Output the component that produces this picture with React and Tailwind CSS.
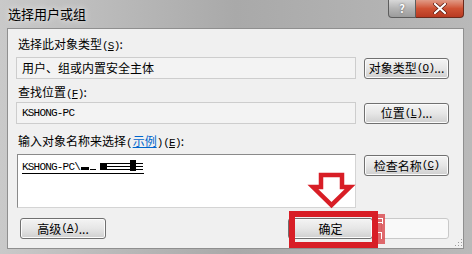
import React from 'react';

const cjk = { fontFamily: '"Microsoft YaHei", "Noto Sans CJK SC", sans-serif' };
const mono = { fontFamily: '"Liberation Mono", "Noto Sans CJK SC", monospace' };

const Key = ({ k }) => (
  <span style={mono} className="text-[11px] tracking-[-0.8px]">
    (<span className="underline">{k}</span>)
  </span>
);

const WinButton = ({ children, className = '' }) => (
  <div
    className={`h-[21px] w-[85px] flex items-center justify-center whitespace-nowrap rounded-[3px] border border-[#707070] bg-gradient-to-b from-[#f4f4f4] via-[#e6e6e6] to-[#cfcfcf] text-[12px] text-black shadow-[inset_0_0_0_1px_#fbfbfb] ${className}`}
  >
    {children}
  </div>
);

const Field = ({ children, className = '' }) => (
  <div className={`flex-1 h-[22px] flex items-center border border-[#cdcdcd] bg-[#f3f3f3] pl-[5px] ${className}`}>
    {children}
  </div>
);

export default function App() {
  return (
    <div
      style={cjk}
      className="relative w-[472px] h-[254px] overflow-hidden bg-gradient-to-r from-[#c9c9c9] via-[#a9a9a9] to-[#b9b9b9] text-black"
    >
      {/* title bar */}
      <div className="h-[28px] flex items-start">
        <div className="pl-[8px] pt-[6px] text-[13px] leading-[16px] text-black [text-shadow:0_0_6px_#ffffff]">
          选择用户或组
        </div>
        <div className="ml-auto mr-[8px] flex">
          <div className="w-[28px] h-[18px] flex items-center justify-center rounded-bl-[4px] border border-t-0 border-[#5d5d5d] bg-gradient-to-b from-[#d8d8d8] via-[#b4b4b4] to-[#9c9c9c] text-[11px] font-bold text-white [text-shadow:0_0_2px_#555]">
            ?
          </div>
          <div className="w-[48px] h-[18px] flex items-center justify-center rounded-br-[4px] border border-t-0 border-l-0 border-[#6b2a1c] bg-gradient-to-b from-[#e09a86] via-[#cf5234] to-[#b83a22]">
            <svg width="14" height="11" viewBox="0 0 14 11">
              <path d="M2 1 L12 10 M12 1 L2 10" stroke="#5a1a10" strokeWidth="3.6" strokeLinecap="round" />
              <path d="M2 1 L12 10 M12 1 L2 10" stroke="#ffffff" strokeWidth="2.2" strokeLinecap="round" />
            </svg>
          </div>
        </div>
      </div>

      {/* content panel */}
      <div className="ml-[7px] mr-[8px] h-[221px] border border-[#8f8f8f] bg-[#f0f0f0] pl-[8px] pr-[14px] text-[12px]">
        <div className="mt-[7px] h-[16px] leading-[16px] pl-[2px]">
          选择此对象类型<Key k="S" />:
        </div>
        <div className="mt-[5px] flex items-center gap-[8px]">
          <Field>用户、组或内置安全主体</Field>
          <WinButton>
            对象类型<Key k="O" />...
          </WinButton>
        </div>

        <div className="mt-[5px] h-[16px] leading-[16px] pl-[2px]">
          查找位置<Key k="F" />:
        </div>
        <div className="mt-[2px] flex items-center gap-[8px]">
          <Field>
            <span style={mono} className="text-[11px] tracking-[-0.8px]">KSHONG-PC</span>
          </Field>
          <WinButton>
            位置<Key k="L" />...
          </WinButton>
        </div>

        <div className="mt-[9px] h-[16px] leading-[16px] pl-[2px]">
          输入对象名称来选择<span style={mono} className="text-[11px]">(</span>
          <span className="text-[#0066cc] underline">示例</span>
          <span style={mono} className="text-[11px]">)</span>
          <Key k="E" />:
        </div>
        <div className="mt-[5px] flex items-start gap-[8px]">
          <div className="flex-1 h-[54px] ml-[1px] border border-[#8a8a8a] border-r-[#d4d4d4] border-b-[#d4d4d4] bg-white pl-[4px] pt-[5px]">
            <div className="flex items-end h-[14px] w-fit border-b border-black">
              <span style={mono} className="text-[11px] leading-[12px] tracking-[-0.8px]">KSHONG-PC\</span>
              <svg width="64" height="13" viewBox="0 0 64 13" className="mb-[1px]">
                <rect x="1" y="8" width="8" height="3" fill="#000" />
                <rect x="10" y="10" width="6" height="1" fill="#000" />
                <rect x="20" y="4" width="7" height="7" fill="#000" />
                <rect x="27" y="4" width="24" height="1" fill="#000" />
                <rect x="27" y="7" width="24" height="1" fill="#000" />
                <rect x="27" y="10" width="24" height="1" fill="#000" />
                <rect x="50" y="1" width="6" height="11" fill="#000" />
                <rect x="56" y="4" width="7" height="1" fill="#000" />
                <rect x="56" y="7" width="7" height="1" fill="#000" />
                <rect x="56" y="10" width="7" height="1" fill="#000" />
              </svg>
            </div>
          </div>
          <WinButton className="mt-[1px]">
            检查名称<Key k="C" />
          </WinButton>
        </div>

        <div className="mt-[10px] flex items-center">
          <WinButton className="ml-[4px] w-[86px] h-[21px]">
            高级<Key k="A" />...
          </WinButton>
          <WinButton className="ml-auto w-[76px] h-[21px]">确定</WinButton>
          <div className="ml-[8px] h-[21px] w-[68px] rounded-[3px] border border-[#c9c9c9] bg-[#f9f9f9]" />
        </div>
      </div>

      {/* resize grip */}
      <svg className="absolute left-[455px] top-[239px]" width="8" height="8" viewBox="0 0 8 8">
        <rect x="6" y="0" width="1" height="1" fill="#9a9a9a" />
        <rect x="3" y="3" width="1" height="1" fill="#9a9a9a" />
        <rect x="6" y="3" width="1" height="1" fill="#9a9a9a" />
        <rect x="0" y="6" width="1" height="1" fill="#9a9a9a" />
        <rect x="3" y="6" width="1" height="1" fill="#9a9a9a" />
        <rect x="6" y="6" width="1" height="1" fill="#9a9a9a" />
      </svg>

      {/* annotation: arrow + highlight box */}
      <svg className="absolute left-[305px] top-[168px]" width="56" height="44" viewBox="0 0 56 44">
        <polygon
          points="16,7 37,7 37,19 45,19 26.5,37 8,19 16,19"
          fill="#ffffff"
          stroke="#d81e26"
          strokeWidth="4.5"
          strokeLinejoin="miter"
        />
      </svg>
      <div className="absolute left-[289px] top-[211px] w-[89px] h-[37px] border-[6px] border-[#d81e26]" />
      {/* watermark fragment */}
      <svg className="absolute left-[378px] top-[214px]" width="7" height="30" viewBox="0 0 7 30">
        <rect width="7" height="30" fill="#d9454a" opacity="0.8" />
        <rect x="0" y="4" width="5" height="1" fill="#fff" />
        <rect x="0" y="8" width="5" height="1" fill="#fff" />
        <rect x="4" y="4" width="1" height="6" fill="#fff" />
        <rect x="0" y="18" width="4" height="1" fill="#fff" />
        <rect x="3" y="18" width="1" height="7" fill="#fff" />
      </svg>
    </div>
  );
}
